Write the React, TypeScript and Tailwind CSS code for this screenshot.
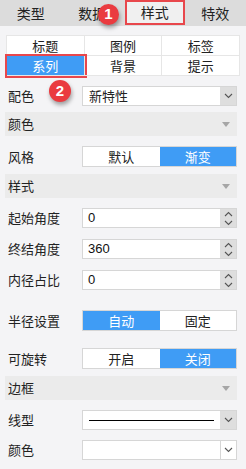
import React from "react";

const FONT = { fontFamily: '"Noto Sans CJK SC", "Liberation Sans", sans-serif' };

function Chevron({ up = false }: { up?: boolean }) {
  return (
    <svg width="9" height="6" viewBox="0 0 9 6" className={up ? "rotate-180" : ""}>
      <path d="M1 1 L4.5 4.5 L8 1" fill="none" stroke="#555" strokeWidth="1.1" />
    </svg>
  );
}

function Badge({ n, className }: { n: number; className: string }) {
  return (
    <div
      className={`absolute flex items-center justify-center rounded-full bg-[#ea3b40] text-white text-[15px] font-bold shadow-[1px_3px_4px_rgba(0,0,0,0.35)] ${className}`}
      style={{ fontFamily: '"Liberation Sans", sans-serif' }}
    >
      {n}
    </div>
  );
}

function Row({ label, children, className = "" }: { label: string; children: React.ReactNode; className?: string }) {
  return (
    <div className={`flex items-center ${className}`}>
      <div className="w-[76px] pl-[2px] text-[13px] text-[#222]">{label}</div>
      <div className="w-[155px]">{children}</div>
    </div>
  );
}

function Section({ title, className = "" }: { title: string; className?: string }) {
  return (
    <div className={`flex h-[24px] items-center justify-between bg-[#ebebeb] pl-[3px] pr-[7px] text-[13px] text-[#222] ${className}`}>
      <span>{title}</span>
      <svg width="8" height="5" viewBox="0 0 8 5">
        <path d="M0 0 H8 L4 5 Z" fill="#a6a6a6" />
      </svg>
    </div>
  );
}

function Select({ children, light = false }: { children?: React.ReactNode; light?: boolean }) {
  return (
    <div className="flex h-[20px] border border-[#d6d6d6] bg-white">
      <div className="flex flex-1 items-center pl-[6px] text-[13px] text-[#222]">{children}</div>
      <div className={`flex w-[16px] items-center justify-center ${light ? "border-l border-[#d6d6d6] bg-white" : "bg-[#dedede]"}`}>
        <Chevron />
      </div>
    </div>
  );
}

function NumInput({ value }: { value: string }) {
  return (
    <div className="flex h-[20px] border border-[#d6d6d6] bg-white">
      <div
        className="flex flex-1 items-center pl-[5px] text-[13px] text-[#111]"
        style={{ fontFamily: '"Liberation Sans", sans-serif' }}
      >
        {value}
      </div>
      <div className="flex w-[16px] flex-col items-center justify-center gap-[3px] bg-[#dedede]">
        <Chevron up />
        <Chevron />
      </div>
    </div>
  );
}

function Toggle({ options, active }: { options: string[]; active: number }) {
  return (
    <div className="flex h-[21px] border border-[#d6d6d6] bg-white">
      {options.map((o, i) => (
        <div
          key={o}
          className={`flex flex-1 items-center justify-center text-[13px] ${i === active ? "bg-[#3f9cf5] text-white" : "text-[#222]"}`}
        >
          {o}
        </div>
      ))}
    </div>
  );
}

export default function App() {
  const tabs = ["类型", "数据", "样式", "特效"];
  const subTabs = ["标题", "图例", "标签", "系列", "背景", "提示"];

  return (
    <div className="relative h-[469px] w-[246px] overflow-hidden bg-[#f4f4f6]" style={FONT}>
      <div className="grid h-[26px] grid-cols-4 bg-[#dcdcdc] text-[14px] text-[#222]">
        {tabs.map((t, i) => (
          <div
            key={t}
            className={`flex items-center justify-center ${i === 2 ? "mb-[2px] ml-[2px] border-2 border-[#e8474c] bg-[#f0f0f0]" : ""}`}
          >
            {t}
          </div>
        ))}
      </div>

      <div className="px-[6px] pt-[9px]">
        <div className="grid grid-cols-3 border-l border-t border-[#e6e6e6] bg-white">
          {subTabs.map((t, i) => (
            <div
              key={t}
              className={`flex h-[20px] items-center justify-center border-b border-r border-[#e6e6e6] text-[13px] ${
                i === 3 ? "bg-[#3f9cf5] text-white outline-2 outline-[#e8474c]" : "text-[#222]"
              }`}
            >
              {t}
            </div>
          ))}
        </div>

        <Row label="配色" className="mt-[10px]">
          <Select>新特性</Select>
        </Row>

        <Section title="颜色" className="mt-[6px] -ml-[1px] w-[232px]" />

        <Row label="风格" className="mt-[10px]">
          <Toggle options={["默认", "渐变"]} active={1} />
        </Row>

        <Section title="样式" className="mt-[7px] -ml-[1px] w-[232px]" />

        <Row label="起始角度" className="mt-[10px]">
          <NumInput value="0" />
        </Row>
        <Row label="终结角度" className="mt-[11px]">
          <NumInput value="360" />
        </Row>
        <Row label="内径占比" className="mt-[11px]">
          <NumInput value="0" />
        </Row>

        <Row label="半径设置" className="mt-[20px]">
          <Toggle options={["自动", "固定"]} active={0} />
        </Row>
        <Row label="可旋转" className="mt-[17px]">
          <Toggle options={["开启", "关闭"]} active={1} />
        </Row>

        <Section title="边框" className="mt-[7px] -ml-[1px] w-[232px]" />

        <Row label="线型" className="mt-[10px]">
          <Select>
            <div className="mr-[6px] h-px w-full bg-black" />
          </Select>
        </Row>
        <Row label="颜色" className="mt-[10px]">
          <Select light />
        </Row>
      </div>

      <Badge n={1} className="left-[98px] top-[4px] h-[21px] w-[21px]" />
      <Badge n={2} className="left-[49px] top-[80px] h-[22px] w-[22px]" />
    </div>
  );
}
